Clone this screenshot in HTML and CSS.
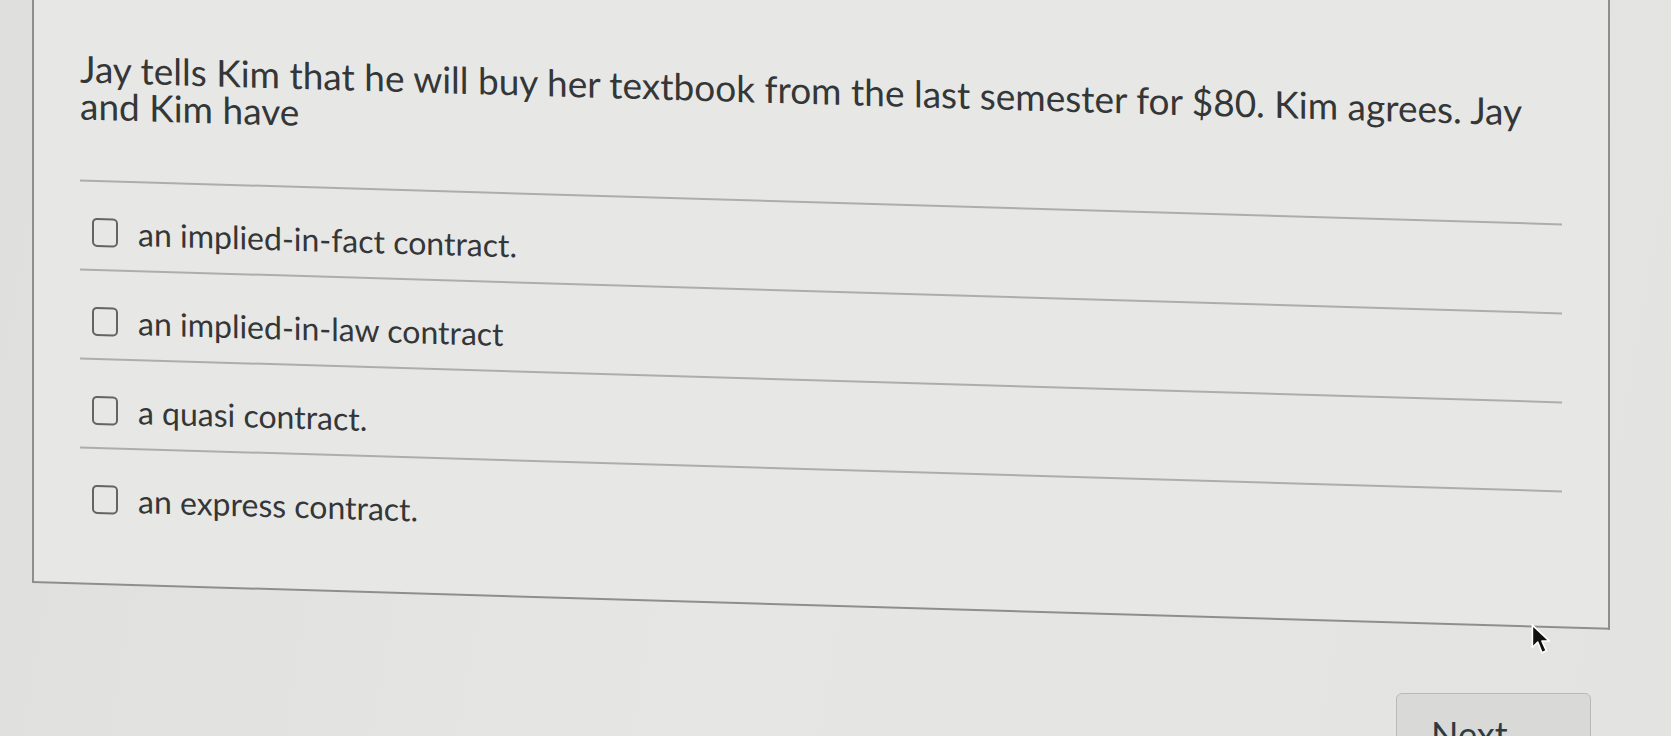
FILE: index.html
```html
<!DOCTYPE html>
<html lang="en">
<head>
    <meta charset="UTF-8">
    <meta name="viewport" content="width=device-width, initial-scale=1.0">
    <title>Quiz Question</title>
    <link rel="stylesheet" href="styles.css">
</head>
<body>
    <div class="question-card">
        <p class="question-text">Jay tells Kim that he will buy her textbook from the last semester for $80. Kim agrees. Jay and Kim have</p>

        <div class="answers">
            <label class="answer">
                <span class="check"></span>
                <span class="answer-text">an implied-in-fact contract.</span>
            </label>
            <label class="answer">
                <span class="check"></span>
                <span class="answer-text">an implied-in-law contract</span>
            </label>
            <label class="answer">
                <span class="check"></span>
                <span class="answer-text">a quasi contract.</span>
            </label>
            <label class="answer">
                <span class="check"></span>
                <span class="answer-text">an express contract.</span>
            </label>
        </div>
    </div>

    <div class="nav-row">
        <button class="next-btn">Next <span class="caret">&#9656;</span></button>
    </div>

    <!-- mouse pointer -->
    <svg class="pointer" width="24" height="32" viewBox="0 0 22 30">
        <path d="M2 1 L2 22 L7 17 L11 27 L15 25 L11 16 L18 16 Z" fill="#111" stroke="#fff" stroke-width="1.5" stroke-linejoin="round"/>
    </svg>
</body>
</html>
```

FILE: styles.css
```css
body {
    margin: 0;
    font-family: Lato, "Open Sans", sans-serif;
    background: linear-gradient(100deg, #dfe0dd 0%, #e6e7e4 45%, #e3e4e1 100%);
    color: #343638;
    height: 736px;
    overflow: hidden;
    position: relative;
}

/* the photo is taken at a slight angle, so the card is skewed a little */
.question-card {
    margin: -60px 0 0 32px;
    width: 1578px;
    box-sizing: border-box;
    height: 643px;
    padding: 60px 46px 0;
    border: 2px solid #8d8f8e;
    border-top: none;
    background-color: #e7e8e5;
    transform: skewY(1.7deg);
    transform-origin: 0 60px;
}

.question-text {
    margin: 0;
    padding-top: 48px;
    font-size: 37px;
    line-height: 37px;
}

.answers {
    margin-top: 56px;
}

.answer {
    display: flex;
    align-items: center;
    gap: 20px;
    height: 89px;
    box-sizing: border-box;
    padding: 14px 0 0 12px;
    border-top: 2px solid #acaeac;
}

.check {
    width: 22px;
    height: 25px;
    border: 2.5px solid #626566;
    border-radius: 5px;
    flex-shrink: 0;
}

.answer-text {
    font-size: 32px;
}

.nav-row {
    display: flex;
    justify-content: flex-end;
    padding-right: 80px;
    margin-top: 110px;
}

.next-btn {
    width: 195px;
    font-family: Lato, sans-serif;
    font-size: 36px;
    line-height: normal;
    color: #2d3b45;
    background-color: #d9dad7;
    border: 1px solid #b9bab8;
    border-radius: 6px;
    padding: 18px 0 20px 34px;
    text-align: left;
}

.caret {
    font-size: 24px;
    margin-left: 6px;
}

.pointer {
    position: absolute;
    left: 1530px;
    top: 624px;
}
```
